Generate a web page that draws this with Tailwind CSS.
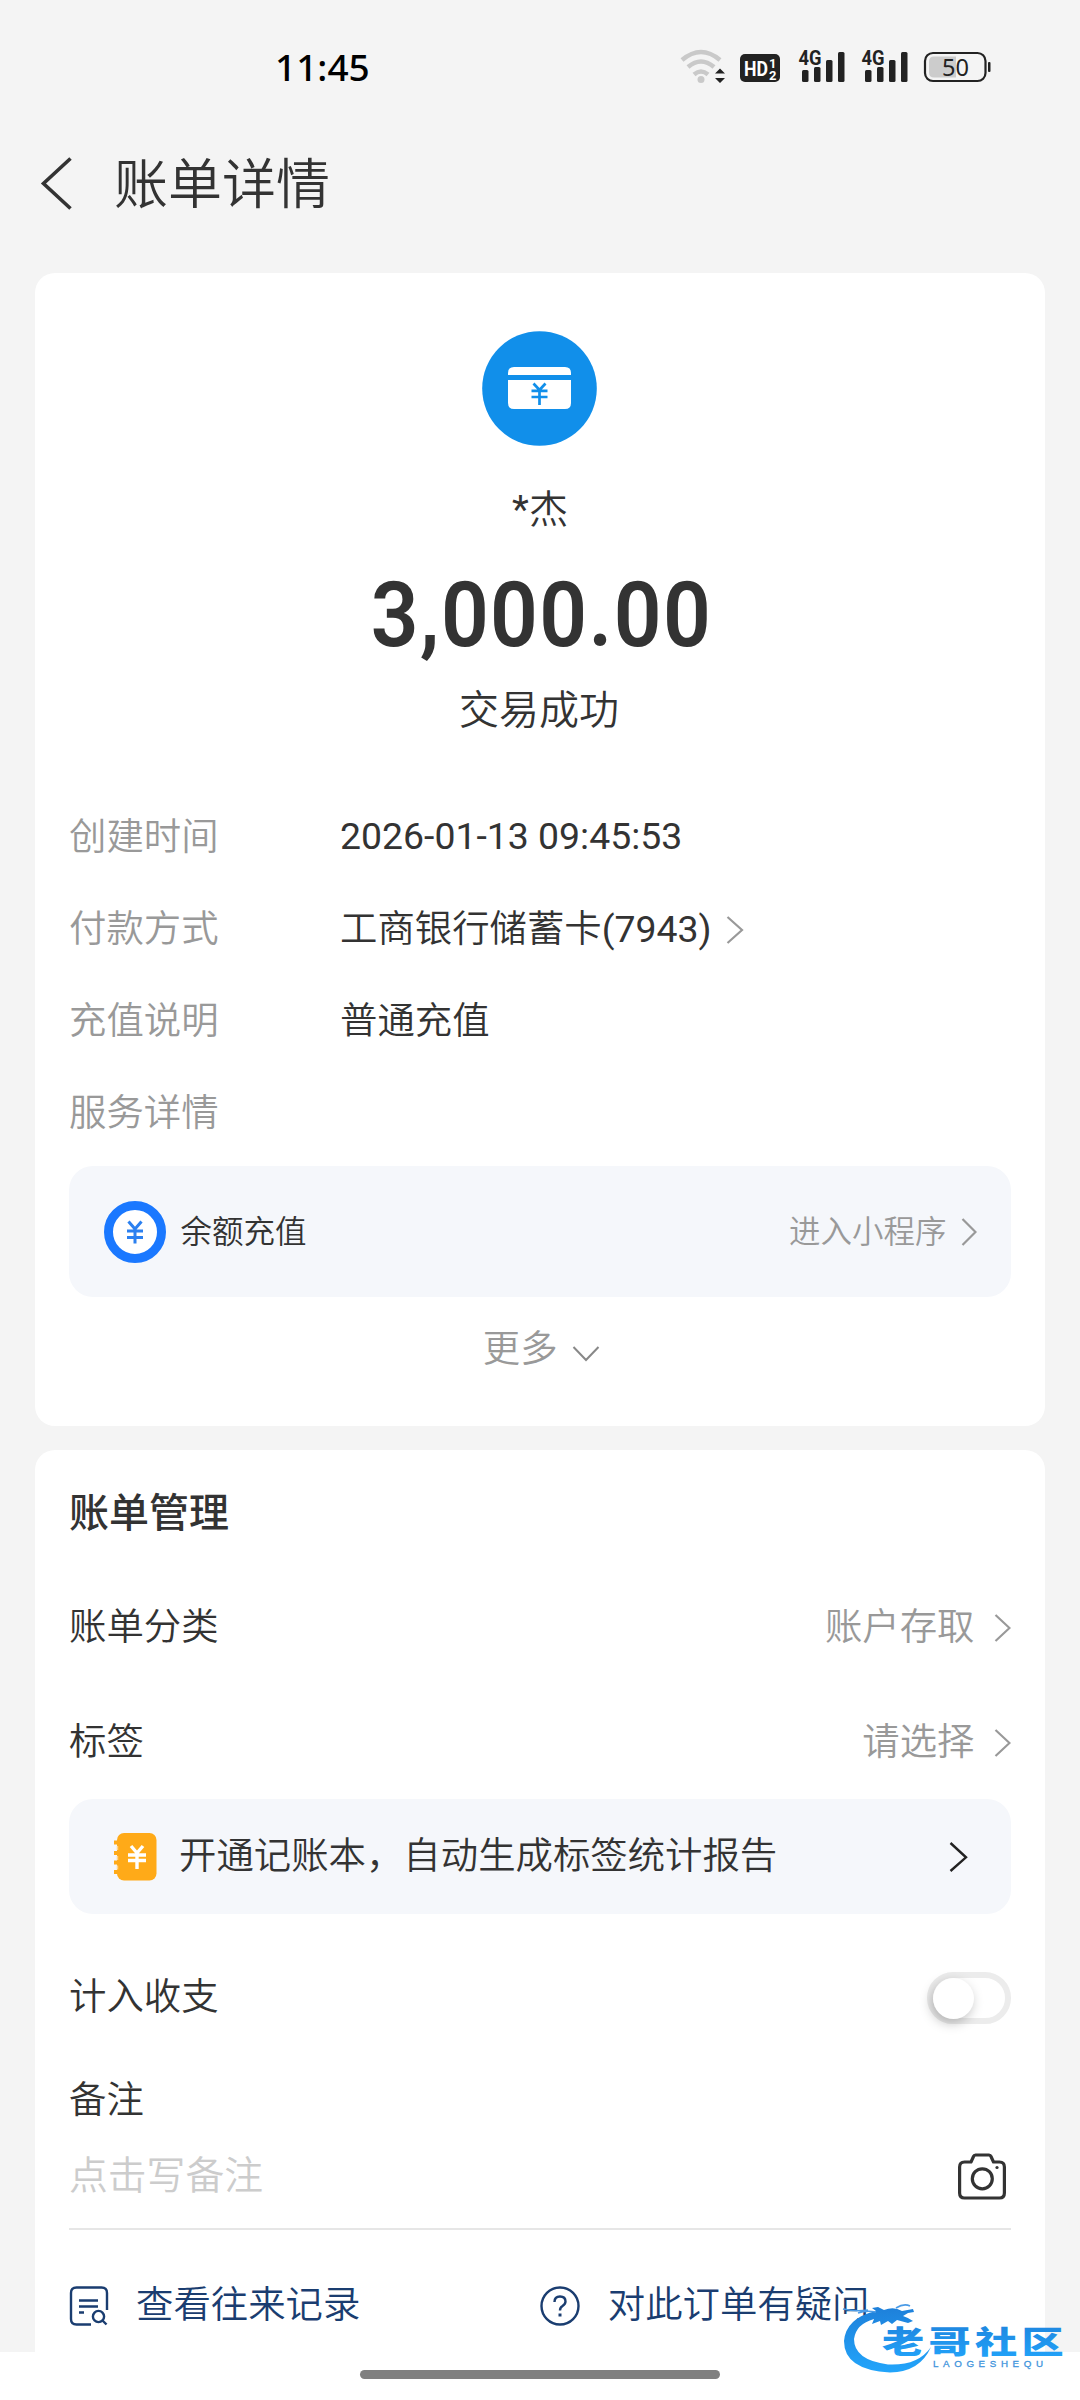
<!DOCTYPE html>
<html lang="zh-CN">
<head>
<meta charset="utf-8">
<title>账单详情</title>
<script src="https://cdn.jsdelivr.net/npm/@tailwindcss/browser@4"></script>
</head>
<body class="relative flex h-[2400px] w-[1080px] flex-col overflow-hidden bg-[#f4f4f4] font-['Roboto','Noto_Sans_CJK_SC',sans-serif] text-[37.4px] leading-none text-[#333]">

<!-- status bar -->
<header class="flex h-[134px] shrink-0 items-center justify-between pr-[69px] pl-[275px]">
  <div class="pb-[2px] font-['Noto_Sans',sans-serif] text-[37px] font-medium text-black">11:45</div>
  <svg class="mt-[6px] h-[80px] w-[332px]" viewBox="0 0 332 80" fill="none">
    <g stroke="#c9c9c9" stroke-width="4.5">
      <path d="M3 30Q22 14 41 30"/><path d="M9 37Q22 26 35 37"/><path d="M15 44.5Q22 38.500 29 44.500"/>
    </g>
    <circle cx="22" cy="49.500" r="3.500" fill="#c9c9c9"/>
    <path d="M36 43.500l5-5 5 5zM36 48l5 5 5-5z" fill="#222"/>
    <rect x="61" y="24" width="40" height="28" rx="5" fill="#222"/>
    <text x="65" y="45.500" font-family="Roboto" font-weight="700" font-size="21" textLength="24" lengthAdjust="spacingAndGlyphs" fill="#fff">HD</text>
    <text x="90" y="37.500" font-family="Roboto" font-weight="700" font-size="13" fill="#fff">1</text>
    <text x="90" y="49.500" font-family="Roboto" font-weight="700" font-size="13" fill="#fff">2</text>
    <g fill="#222">
      <rect x="123" y="40" width="6.500" height="12" rx="1.500"/><rect x="135" y="37" width="6.500" height="15" rx="1.500"/><rect x="147" y="30" width="6.500" height="22" rx="1.500"/><rect x="159" y="22" width="6.500" height="30" rx="1.500"/>
      <rect x="186" y="40" width="6.500" height="12" rx="1.500"/><rect x="198" y="37" width="6.500" height="15" rx="1.500"/><rect x="210" y="30" width="6.500" height="22" rx="1.500"/><rect x="222" y="22" width="6.500" height="30" rx="1.500"/>
      <text x="119.500" y="35" font-family="Roboto" font-weight="700" font-size="21" textLength="23" lengthAdjust="spacingAndGlyphs">4G</text>
      <text x="182.500" y="35" font-family="Roboto" font-weight="700" font-size="21" textLength="23" lengthAdjust="spacingAndGlyphs">4G</text>
    </g>
    <path d="M277 26.500H255Q250 26.500 250 31.500V42.500Q250 47.500 255 47.500H277Z" fill="#ccc"/>
    <rect x="246" y="23" width="60.500" height="28" rx="8" stroke="#222" stroke-width="2.200"/>
    <rect x="309" y="32" width="2.500" height="10" rx="1" fill="#222"/>
    <text x="263" y="46" font-family="Noto Sans" font-size="24" textLength="27" lengthAdjust="spacingAndGlyphs" fill="#222">50</text>
  </svg>
</header>

<!-- title bar -->
<div class="flex h-[139px] shrink-0 items-center gap-[42px] pb-[41px] pl-10">
  <svg class="h-[54px] w-8" viewBox="0 0 32 54" fill="none" stroke="#333" stroke-width="3.600"><path d="M30.500 2.500L3.500 27.500L30.500 52.500"/></svg>
  <h1 class="pt-[5px] text-[54px] font-[350]">账单详情</h1>
</div>

<!-- bill card -->
<section class="mx-[35px] flex h-[1153px] shrink-0 flex-col rounded-[20px] bg-white pr-[34.5px] pl-[34px] pt-[58px]">
  <div class="flex flex-col items-center pr-[1.5px]">
    <svg class="size-[115px]" viewBox="0 0 115 115" fill="none">
      <circle cx="57.500" cy="57.500" r="57.300" fill="#118fea"/>
      <path d="M26 44v-2q0-6 6-6h51q6 0 6 6v2z" fill="#fff"/>
      <path d="M26 49h63v23q0 6-6 6H32q-6 0-6-6z" fill="#fff"/>
      <path d="M51.500 52.500l6 6.500 6-6.500M49.500 59.800h16M49.500 66h16M57.500 59v15" stroke="#118fea" stroke-width="2.700"/>
    </svg>
    <div class="mt-[44px] flex h-[40px] items-center pl-[2px] text-[39px]"><span>*</span><span class="font-[350]">杰</span></div>
    <div class="mt-[30px] flex h-[110px] scale-x-92 items-center pl-[5px] text-[91px] font-semibold tracking-[1.5px]">3,000.00</div>
    <div class="mt-[21px] flex h-[40px] items-center text-[40px] font-[350]">交易成功</div>
  </div>

  <dl class="mt-[61px] grid grid-cols-[271px_1fr] auto-rows-[92px] items-center font-[350]">
    <dt class="text-[#999]">创建时间</dt><dd class="pb-[2px] font-normal">2026-01-13 09:45:53</dd>
    <dt class="text-[#999]">付款方式</dt>
    <dd class="flex items-center gap-[14px]"><span>工商银行储蓄卡<span class="font-normal">(7943)</span></span><svg class="h-7 w-[18px]" viewBox="0 0 18 28" fill="none" stroke="#999" stroke-width="2.200"><path d="M1.500 1L16 14L1.500 27"/></svg></dd>
    <dt class="text-[#999]">充值说明</dt><dd>普通充值</dd>
    <dt class="text-[#999]">服务详情</dt><dd></dd>
  </dl>

  <div class="mt-[6px] flex h-[131px] items-center rounded-3xl bg-[#f5f7fb] pr-[34px] pl-[34.5px] text-[31.5px] font-[350]">
    <svg class="size-[62px]" viewBox="0 0 62 62" fill="none">
      <circle cx="31" cy="31" r="26.500" fill="#fff" stroke="#1a78ff" stroke-width="9"/>
      <path d="M24.500 20.500l6.500 7.500 6.500-7.500M23 30h16M23 36.500h16M31 28v14.500" stroke="#2b80f0" stroke-width="3"/>
    </svg>
    <span class="ml-[15px] pt-[2px]">余额充值</span>
    <span class="ml-auto pt-[2px] text-[#999]">进入小程序</span>
    <svg class="ml-[14px] h-7 w-4" viewBox="0 0 16 28" fill="none" stroke="#999" stroke-width="2.200"><path d="M1.500 1L14.500 14L1.500 27"/></svg>
  </div>

  <div class="mt-[33px] flex h-[40px] items-center justify-center gap-[14px] pl-[3px] font-[350] text-[#999]">更多<svg class="mt-[8px] h-4 w-7" viewBox="0 0 28 16" fill="none" stroke="#888" stroke-width="2"><path d="M1.500 1L14 14L26.500 1"/></svg></div>
</section>

<!-- management card -->
<section class="mx-[35px] mt-6 flex h-[902px] shrink-0 flex-col rounded-t-[20px] bg-white pr-[34.5px] pl-[34px] font-[350]">
  <h2 class="flex h-[124px] items-center pt-[3px] text-[40px] font-medium">账单管理</h2>
  <div class="flex h-[106px] items-center pt-[2px]"><span>账单分类</span><span class="ml-auto text-[#999]">账户存取</span><svg class="ml-[19px] h-7 w-[17px]" viewBox="0 0 17 28" fill="none" stroke="#999" stroke-width="2.200"><path d="M1.500 1L15.500 14L1.500 27"/></svg></div>
  <div class="mt-[9px] flex h-[106px] items-center pt-[2px]"><span>标签</span><span class="ml-auto text-[#999]">请选择</span><svg class="ml-[19px] h-7 w-[17px]" viewBox="0 0 17 28" fill="none" stroke="#999" stroke-width="2.200"><path d="M1.500 1L15.500 14L1.500 27"/></svg></div>
  <div class="mt-1 flex h-[115px] items-center rounded-3xl bg-[#f5f7fb] pr-[43px] pl-[45px]">
    <svg class="h-12 w-[43px]" viewBox="0 0 43 48" fill="none">
      <rect x="3" y="0" width="39.500" height="47.500" rx="7" fill="#ffaa18"/>
      <path d="M0 9.500h4M0 20h4M0 29.500h4M0 39h4" stroke="#ffaa18" stroke-width="4"/>
      <path d="M3.500 13v4M3.500 23v4M3.500 32.500v4" stroke="#ffd48a" stroke-width="1.500"/>
      <path d="M17 13l6 7 6-7M14 22h18M14 27.500h18M23 20v16" stroke="#fff" stroke-width="3.400"/>
    </svg>
    <span class="ml-[22px]">开通记账本，自动生成标签统计报告</span>
    <svg class="ml-auto h-[30px] w-[19px]" viewBox="0 0 19 30" fill="none" stroke="#222" stroke-width="2.400"><path d="M1.500 1L17 15.300L1.500 29"/></svg>
  </div>
  <div class="mt-[32px] flex h-[104px] items-center justify-between">
    <span>计入收支</span>
    <span class="flex h-[52px] w-[84px] items-center rounded-full border-[6px] border-[#ececec] bg-white"><i class="size-[41px] rounded-full bg-white shadow-[-2px_4px_12px_rgba(0,0,0,0.25)]"></i></span>
  </div>
  <div class="flex h-[98px] items-center pt-[3px]">备注</div>
  <div class="flex h-[82px] items-start justify-between border-b-2 border-[#e6e6e6] pt-[5px]">
    <span class="pt-[4px] text-[38.8px] text-[#ccc]">点击写备注</span>
    <svg class="mr-[5px] h-12 w-12" viewBox="0 0 48 48" fill="none" stroke="#333" stroke-width="3.200">
      <path d="M6.500 9H13L15.500 3.500Q16 2 17.500 2H31Q32.500 2 33 3.500L35.500 9H41.500Q46.400 9 46.400 14V40Q46.400 45 41.500 45H6.500Q1.600 45 1.600 40V14Q1.600 9 6.500 9Z" stroke-linejoin="round"/>
      <circle cx="24.300" cy="25.800" r="10"/><circle cx="39" cy="14.500" r="1.600" fill="#333" stroke="none"/>
    </svg>
  </div>
  <div class="grid flex-1 grid-cols-2 items-start pt-[56px] text-[#1a3d70]">
    <div class="flex items-center">
      <svg class="h-10 w-10" viewBox="0 0 40 40" fill="none" stroke="#1a3d70" stroke-width="2.400">
        <path d="M38 24V7Q38 1.500 32.500 1.500H7.500Q2 1.500 2 7V33Q2 38.500 7.500 38.500H22"/>
        <path d="M10 14.500H29M10 20.500H29M10 26.500H15"/><circle cx="29.500" cy="30.500" r="5.600"/><path d="M33.500 34.500L37.500 38.500"/>
      </svg>
      <span class="ml-[27px]">查看往来记录</span>
    </div>
    <div class="flex items-center">
      <svg class="h-10 w-10" viewBox="0 0 40 40" fill="none" stroke="#1a3d70" stroke-width="2.400">
        <circle cx="20" cy="20" r="18.500"/><path d="M14.500 16Q14.500 10.500 20 10.500Q25.500 10.500 25.500 15.500Q25.500 18 22.500 20Q20 21.500 20 24.500"/><path d="M20 27.500v3" stroke-width="3"/>
      </svg>
      <span class="ml-[28px]">对此订单有疑问</span>
    </div>
  </div>
</section>

<!-- gesture bar -->
<footer class="flex h-[48px] shrink-0 justify-center bg-white pt-[18px]"><div class="h-[9px] w-[360px] rounded-full bg-[#808080]"></div></footer>

<!-- community watermark -->
<svg class="absolute top-[2290px] left-[836px] h-[100px] w-[240px]" viewBox="0 0 240 100">
  <defs><linearGradient id="wm" x1="0" y1="0" x2="0" y2="1"><stop offset="0" stop-color="#1e80da"/><stop offset="1" stop-color="#22a5fb"/></linearGradient></defs>
  <path d="M40 21Q10 28 8 51Q8 80 54 82.500Q84 82 95 57Q82 76 52 74.500Q18 70 18 49Q20 34 38 29L36 34L44 31L45 35L52 31L56 34L61 30L72 33L77 31Q73 28 67 26L72 23L78 22L77 19L66 21Q58 16 48 20L42 17L36 18Z" fill="url(#wm)"/>
  <path d="M7 19Q20 22 32 20M22 23Q30 20 40 22M60 18Q68 13 74 16" stroke="#4b9be6" stroke-width="1.600" fill="none"/>
  <text transform="translate(46 62.500) scale(1.360 1)" font-family="Noto Sans CJK SC" font-weight="900" font-size="31" letter-spacing="3.200" fill="url(#wm)">老哥社区</text>
  <text x="97" y="76.800" font-family="Liberation Sans" font-size="9.800" textLength="110" fill="#3f94dc" stroke="#3f94dc" stroke-width="0.300">LAOGESHEQU</text>
</svg>
</body>
</html>
